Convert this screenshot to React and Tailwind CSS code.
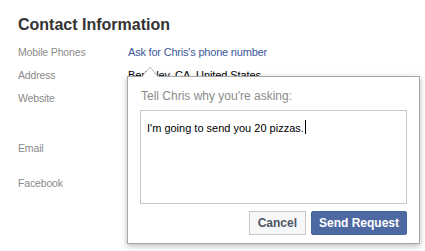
export default function App() {
  const rows = [
    { label: "Mobile Phones", value: <span className="text-[#3b5998] tracking-[-0.2px]">Ask for Chris's phone number</span>, mb: "mb-[9px]" },
    { label: "Address", value: <span className="text-[#000] tracking-[-0.1px]">Berkeley, CA, United States</span>, mb: "mb-[9px]" },
    { label: "Website", value: null, mb: "mb-[36px]" },
    { label: "Email", value: null, mb: "mb-[21px]" },
    { label: "Facebook", value: null, mb: "" },
  ];
  return (
    <div
      className="relative w-[425px] h-[251px] overflow-hidden bg-white"
      style={{ fontFamily: '"Liberation Sans", Arial, sans-serif' }}
    >
      <div className="pl-[18px] pt-[15px]">
        <h2 className="text-[16px] leading-[19px] font-bold text-[#333]">Contact Information</h2>
        <div className="mt-[11px] flex flex-col">
          {rows.map((r) => (
            <div key={r.label} className={`flex text-[11px] leading-[14px] ${r.mb}`}>
              <div className="w-[110px] text-[#8a8a8a] text-[10.5px] tracking-[-0.15px]">{r.label}</div>
              <div>{r.value}</div>
            </div>
          ))}
        </div>
      </div>

      {/* Popup */}
      <div className="absolute left-[127px] top-[76px] w-[293px] h-[168px] bg-white border border-[#a8a8a8] shadow-[0_2px_6px_rgba(0,0,0,0.28)] px-[12px] pt-[12px]">
        <div className="text-[12px] leading-[15px] text-[#8c8c8c] pl-[1px]">Tell Chris why you're asking:</div>
        <div className="mt-[6px] h-[94px] border border-[#c8c8c8] pl-[6px] pt-[10px] text-[11px] leading-[14px] text-black flex items-start">
          <span>I'm going to send you 20 pizzas.</span>
          <span className="ml-[1px] -mt-[1px] inline-block w-[1px] h-[14px] bg-black" />
        </div>
        <div className="mt-[7px] flex justify-end gap-[5px]">
          <button className="h-[24px] px-[8px] border border-[#c6c7ca] bg-[#f6f7f8] text-[12px] font-bold text-[#4e5665] leading-[22px]">
            Cancel
          </button>
          <button className="h-[24px] px-[7px] border border-[#4267a3] bg-[#4e69a2] text-[12px] font-bold text-white leading-[22px] rounded-[2px]">
            Send Request
          </button>
        </div>
      </div>

      {/* Arrow */}
      <svg className="absolute left-[141px] top-[66px]" width="18" height="12" viewBox="0 0 18 12">
        <polygon points="0.5,12 9,1 17.5,12" fill="white" />
        <polyline points="0.5,11 9,1 17.5,11" fill="none" stroke="#b8b8b8" strokeWidth="1" />
      </svg>
    </div>
  );
}
